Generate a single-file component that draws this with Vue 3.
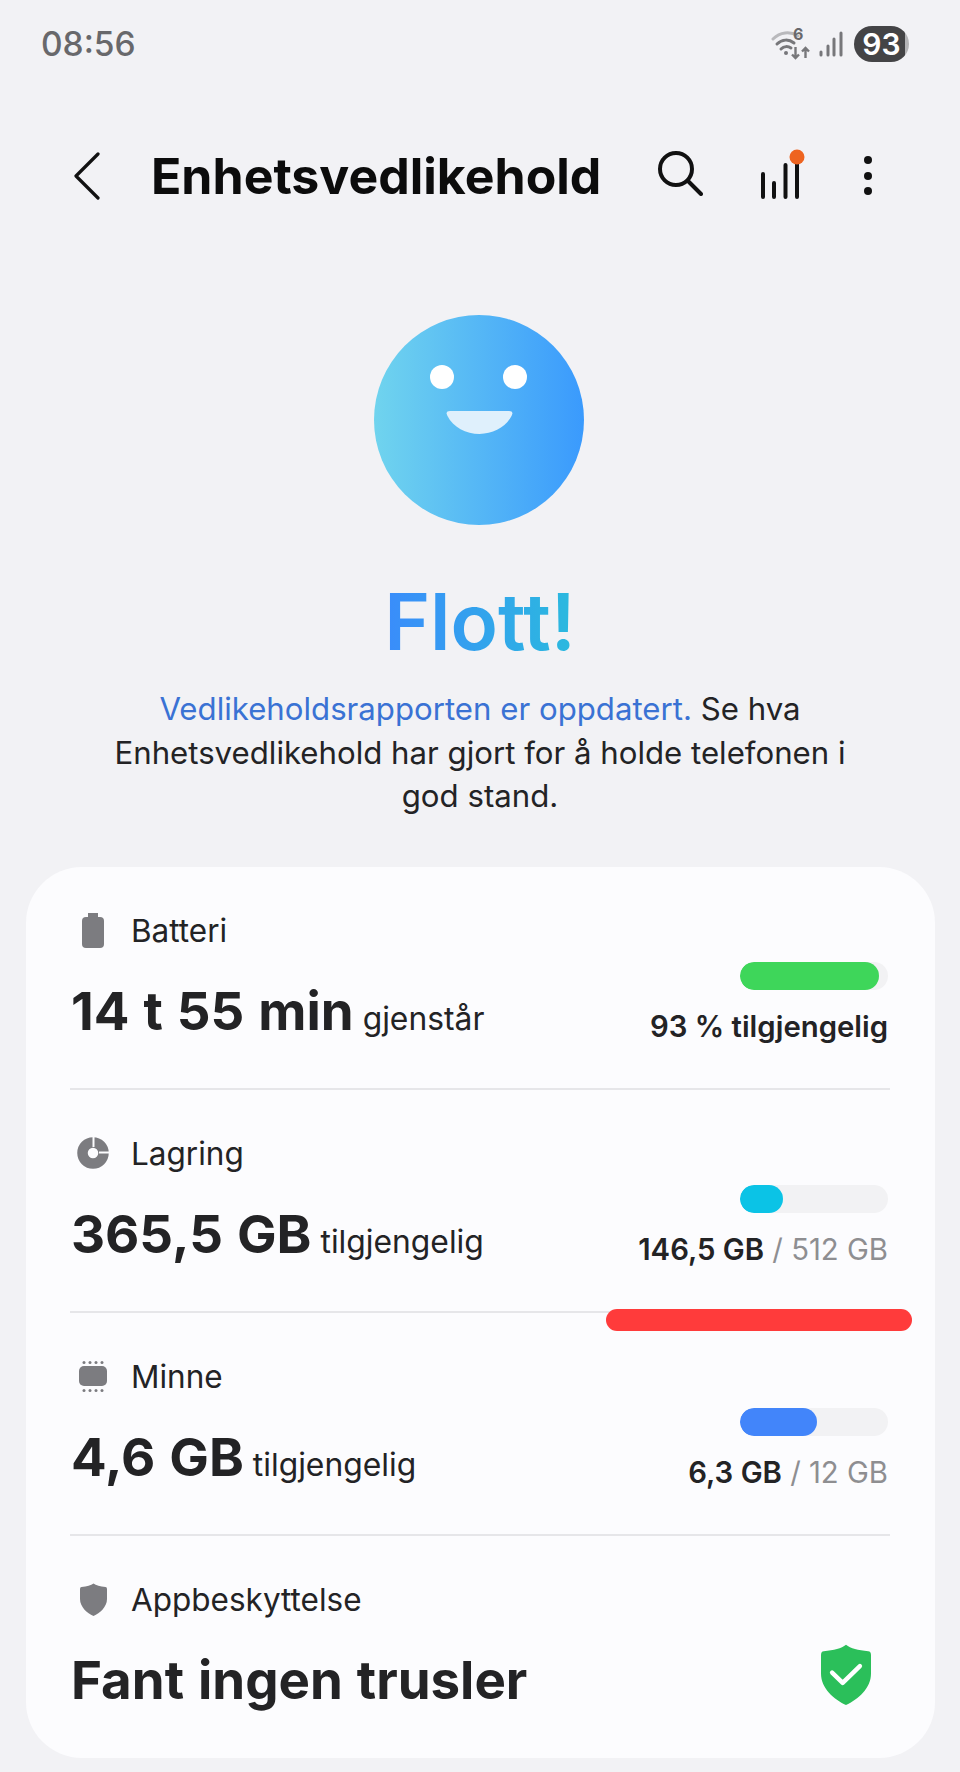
<template>
  <div class="screen">
    <div class="status">
      <span class="time">08:56</span>
      <div class="status-right">
        <div class="net">
          <svg width="40" height="30" viewBox="0 0 40 30" fill="none">
            <path d="M2 9C9 2 19 1 27 6" stroke="#b9b9bc" stroke-width="3" stroke-linecap="round"/>
            <path d="M6 14C11 9 18 9 23 13" stroke="#77777a" stroke-width="3" stroke-linecap="round"/>
            <path d="M10 19C13 16 17 16 20 18" stroke="#77777a" stroke-width="3" stroke-linecap="round"/>
            <circle cx="15" cy="23" r="2" fill="#77777a"/>
            <path d="M24.500 17V28M21 24.500L24.500 28L28 24.500M34.500 28V18M31 21.500L34.500 18L38 21.500" stroke="#77777a" stroke-width="2.400"/>
          </svg>
          <span class="net-label">6</span>
        </div>
        <svg class="signal" width="24" height="26" viewBox="0 0 24 26" fill="none" stroke="#77777a" stroke-width="3" stroke-linecap="round">
          <path d="M2 24V21M9 24V15M15 24V8M22 24V2"/>
        </svg>
        <div class="batt"><span>93</span></div>
      </div>
    </div>

    <div class="toolbar">
      <svg class="back" width="26" height="48" viewBox="0 0 26 48" fill="none">
        <path d="M24 2L2 24L24 46" stroke="#111" stroke-width="3.200" stroke-linecap="round" stroke-linejoin="round"/>
      </svg>
      <h1>Enhetsvedlikehold</h1>
      <div class="actions">
        <svg class="search" width="46" height="46" viewBox="0 0 46 46" fill="none" stroke="#111" stroke-width="4" stroke-linecap="round">
          <circle cx="19" cy="19" r="16"/>
          <path d="M31 31L44 44"/>
        </svg>
        <svg class="stats" width="46" height="58" viewBox="0 0 46 58" fill="none" stroke="#111" stroke-width="4" stroke-linecap="round">
          <path d="M3 51V28M14 51V37M25.500 51V19M37 51V11"/>
          <circle cx="37" cy="11" r="7.500" fill="#ee6420" stroke="none"/>
        </svg>
        <svg class="more" width="8" height="40" viewBox="0 0 8 40" fill="#111">
          <circle cx="4" cy="4" r="4"/>
          <circle cx="4" cy="20" r="4"/>
          <circle cx="4" cy="35" r="4"/>
        </svg>
      </div>
    </div>

    <div class="hero">
      <svg class="face" width="210" height="210" viewBox="0 0 210 210">
        <defs>
          <linearGradient id="faceFill" x1="0" x2="1" y1="0" y2="0">
            <stop offset="0" stop-color="#70d4ee"/>
            <stop offset="1" stop-color="#3a9afd"/>
          </linearGradient>
        </defs>
        <circle cx="105" cy="105" r="105" fill="url(#faceFill)"/>
        <circle cx="68" cy="62" r="12" fill="#fff"/>
        <circle cx="141" cy="62" r="12" fill="#fff"/>
        <path d="M76 96H135Q140 96 137.500 101C132 112 119 119 105.500 119C92 119 79 112 73.500 101Q71 96 76 96Z" fill="#dff0fc"/>
      </svg>
      <div class="great">Flott!</div>
      <p class="intro"><span class="link">Vedlikeholdsrapporten er oppdatert.</span> <span>Se hva</span><br><span>Enhetsvedlikehold har gjort for å holde telefonen i</span><br><span>god stand.</span></p>
    </div>

    <div class="card">
      <div v-for="row in rows" :key="row.name" class="row">
        <div class="label">
          <span class="label-icon">
            <svg v-if="row.icon === 'battery'" width="22" height="35" viewBox="0 0 22 35" fill="#7c7c80">
              <path d="M6 0H16V5H6Z"/>
              <rect y="4" width="22" height="31" rx="4"/>
            </svg>
            <svg v-else-if="row.icon === 'storage'" width="32" height="32" viewBox="0 0 32 32">
              <circle cx="16" cy="16" r="10.500" fill="none" stroke="#7c7c80" stroke-width="10.500"/>
              <path d="M16.500 0V10M22 15.500H32" stroke="#fcfcfe" stroke-width="2" fill="none"/>
            </svg>
            <svg v-else-if="row.icon === 'chip'" width="28" height="31" viewBox="0 0 28 31" fill="#7c7c80">
              <rect y="5" width="28" height="20" rx="5"/>
              <circle v-for="x in [5, 11, 17, 23]" :key="'t' + x" :cx="x" cy="1.500" r="1.500"/>
              <circle v-for="x in [5, 11, 17, 23]" :key="'b' + x" :cx="x" cy="29.500" r="1.500"/>
            </svg>
            <svg v-else width="27" height="33" viewBox="0 0 27 33" fill="#7c7c80">
              <path :d="shieldPath"/>
            </svg>
          </span>
          <span>{{ row.name }}</span>
        </div>
        <div class="main">
          <div class="value">
            <b>{{ row.value }}</b>
            <span v-if="row.suffix" class="suffix">{{ row.suffix }}</span>
          </div>
          <div v-if="row.fill" class="usage">
            <div class="track">
              <div class="fill" :style="{ width: row.fill + 'px', background: row.color }"></div>
            </div>
            <div class="amount">
              <b>{{ row.used }}</b><span v-if="row.total" class="total"> / {{ row.total }}</span>
            </div>
          </div>
          <svg v-else class="safe" width="50" height="63" viewBox="0 0 27 33">
            <path :d="shieldPath" fill="#2bbf5a"/>
            <path d="M6 15.500L11.700 21L21 12" fill="none" stroke="#fff" stroke-width="2.400" stroke-linecap="round" stroke-linejoin="round"/>
          </svg>
        </div>
      </div>
      <div class="scribble"></div>
    </div>
  </div>
</template>

<script setup>
const shieldPath = 'M13.5 0.5C16 2.5 20 3.5 25.5 4Q27 4.2 27 6V16C27 24 20 30 13.5 33C7 30 0 24 0 16V6Q0 4.2 1.5 4C7 3.5 11 2.500 13.5 0.5Z'

const rows = [
  {name: 'Batteri', icon: 'battery', value: '14 t 55 min', suffix: 'gjenstår', fill: 139, color: '#3ed65a', used: '93 % tilgjengelig'},
  {name: 'Lagring', icon: 'storage', value: '365,5 GB', suffix: 'tilgjengelig', fill: 43, color: '#0bc3e6', used: '146,5 GB', total: '512 GB'},
  {name: 'Minne', icon: 'chip', value: '4,6 GB', suffix: 'tilgjengelig', fill: 77, color: '#4285fa', used: '6,3 GB', total: '12 GB'},
  {name: 'Appbeskyttelse', icon: 'shield', value: 'Fant ingen trusler'}
]
</script>

<style>
html, body {
  background: #f2f2f5;
}
</style>

<style scoped>
.screen {
  width: 960px;
  height: 1772px;
  overflow: hidden;
  background: #f2f2f5;
  font-family: Inter, "Noto Sans", sans-serif;
  color: #232325;
}

.status {
  height: 88px;
  padding: 0 51px 0 41px;
  display: flex;
  align-items: center;
  justify-content: space-between;
}

.time {
  font-size: 33.500px;
  font-weight: 500;
  color: #68686b;
}

.status-right {
  display: flex;
  align-items: center;
}

.net {
  position: relative;
  width: 40px;
  height: 30px;
  margin-top: 2px;
  margin-right: 8px;
}

.net-label {
  position: absolute;
  top: -6px;
  left: 22px;
  font-size: 16px;
  font-weight: 700;
  color: #68686b;
}

.signal {
  margin-right: 11px;
}

.batt {
  width: 55px;
  height: 36px;
  border-radius: 18px;
  overflow: hidden;
  background: linear-gradient(90deg, #444446 92%, #b4b4b6 92%);
  color: #fff;
  font-size: 30px;
  font-weight: 600;
  display: flex;
  align-items: center;
  justify-content: center;
}

.toolbar {
  height: 176px;
  padding-left: 74px;
  display: flex;
  align-items: center;
}

h1 {
  margin: 0 0 0 51px;
  font-size: 50px;
  font-weight: 700;
  color: #0c0c0c;
  white-space: nowrap;
}

.actions {
  display: flex;
  align-items: center;
  margin-left: 56px;
}

.search {
  margin-top: -6px;
}

.stats {
  margin-left: 57px;
  margin-top: -2px;
}

.more {
  margin-left: 58px;
  margin-top: 0;
}

.hero {
  display: flex;
  flex-direction: column;
  align-items: center;
  padding-top: 51px;
}

.face {
  display: block;
  margin-left: -2px;
}

.great {
  margin-top: 50px;
  font-size: 78px;
  line-height: 94px;
  font-weight: 600;
  background: linear-gradient(90deg, #3a8cfb, #2bbade);
  -webkit-background-clip: text;
  background-clip: text;
  color: transparent;
}

.intro {
  margin: 19px 0 0;
  width: 780px;
  text-align: center;
  font-size: 31.200px;
  line-height: 43.500px;
}

.link {
  color: #3a72d4;
}

.card {
  position: relative;
  margin: 48.500px 0 0 26px;
  width: 909px;
  height: 891px;
  box-sizing: border-box;
  padding: 0 45px 0 44px;
  border-radius: 56px;
  background: #fcfcfe;
}

.row {
  height: 223px;
  box-sizing: border-box;
  padding-top: 44px;
  border-bottom: 2px solid #e6e6e9;
}

.row:nth-child(4) {
  border-bottom: 0;
}

.label {
  height: 38px;
  display: flex;
  align-items: center;
  font-size: 31.500px;
}

.label-icon {
  width: 46px;
  margin-right: 15px;
  display: flex;
  justify-content: center;
}

.main {
  display: flex;
  justify-content: space-between;
  align-items: flex-start;
  margin-top: 13px;
}

.value {
  margin-top: 16px;
  padding-left: 1px;
  font-size: 52.800px;
  line-height: 66px;
  word-spacing: 1.500px;
  white-space: nowrap;
}

.value b {
  font-weight: 700;
}

.suffix {
  margin-left: 9px;
  font-size: 31.800px;
}

.usage {
  display: flex;
  flex-direction: column;
  align-items: flex-end;
  margin-right: 2px;
}

.track {
  width: 148px;
  height: 28px;
  border-radius: 14px;
  overflow: hidden;
  background: #f2f2f4;
}

.fill {
  height: 100%;
  border-radius: 14px;
}

.amount {
  margin-top: 18px;
  font-size: 29.300px;
  line-height: 38px;
  white-space: nowrap;
}

.amount b {
  font-weight: 600;
}

.total {
  color: #8e8e91;
}

.safe {
  margin-right: 19px;
  margin-top: 12px;
}

.scribble {
  position: absolute;
  left: 580px;
  top: 442px;
  width: 306px;
  height: 22px;
  border-radius: 11px;
  background: #ff3b3b;
}
</style>
